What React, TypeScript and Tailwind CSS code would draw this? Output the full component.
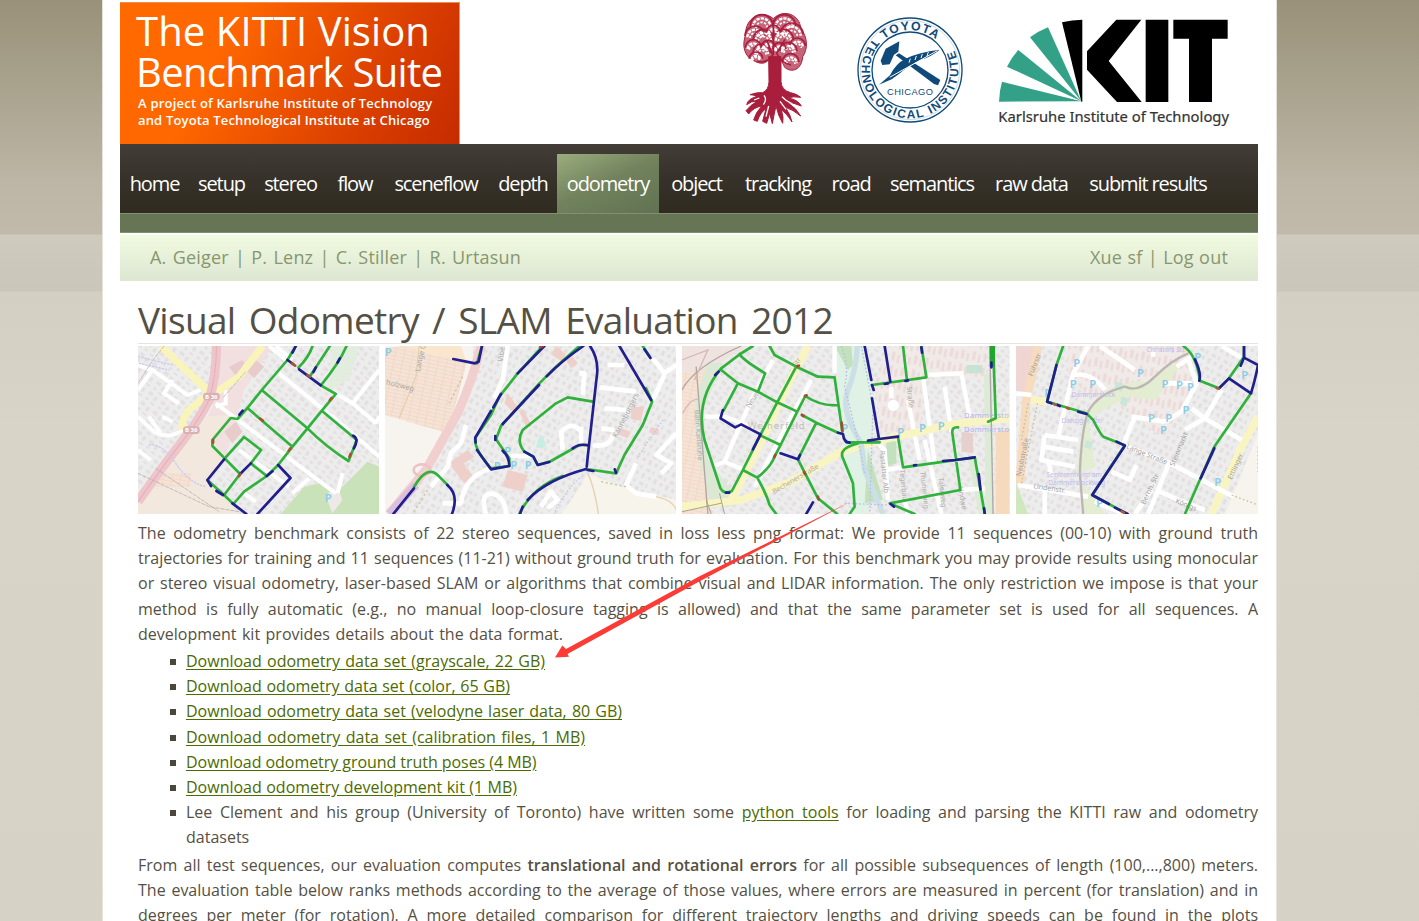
import React from "react";

const navItems: { label: string; box: string; active?: boolean }[] = [
  { label: "home", box: "w-[69px]" },
  { label: "setup", box: "w-[65px]" },
  { label: "stereo", box: "w-[73px]" },
  { label: "flow", box: "w-[56px]" },
  { label: "sceneflow", box: "w-[106px]" },
  { label: "depth", box: "w-[68px]" },
  { label: "odometry", box: "w-[102px]", active: true },
  { label: "object", box: "w-[75px]" },
  { label: "tracking", box: "w-[88px]" },
  { label: "road", box: "w-[58px]" },
  { label: "semantics", box: "w-[104px]" },
  { label: "raw data", box: "w-[95px]" },
  { label: "submit results", box: "w-[138px]" },
];

const intro = [
  "The odometry benchmark consists of 22 stereo sequences, saved in loss less png format: We provide 11 sequences (00-10) with ground truth",
  "trajectories for training and 11 sequences (11-21) without ground truth for evaluation. For this benchmark you may provide results using monocular",
  "or stereo visual odometry, laser-based SLAM or algorithms that combine visual and LIDAR information. The only restriction we impose is that your",
  "method is fully automatic (e.g., no manual loop-closure tagging is allowed) and that the same parameter set is used for all sequences. A",
];

const downloads = [
  { label: "Download odometry data set (grayscale, 22 GB)", box: "w-[359px]" },
  { label: "Download odometry data set (color, 65 GB)", box: "w-[324px]" },
  { label: "Download odometry data set (velodyne laser data, 80 GB)", box: "w-[436px]" },
  { label: "Download odometry data set (calibration files, 1 MB)", box: "w-[399px]" },
  { label: "Download odometry ground truth poses (4 MB)", box: "w-[349px] tracking-[-0.05px]" },
  { label: "Download odometry development kit (1 MB)", box: "w-[331px]" },
];

function Line({ children }: { children: React.ReactNode }) {
  return <div className="whitespace-nowrap [text-align-last:justify]">{children}</div>;
}

function Bullet({ children }: { children: React.ReactNode }) {
  return (
    <li className="flex">
      <span className="mt-[10px] mr-[10px] ml-[32px] h-[6px] w-[6px] shrink-0 bg-[#4c473b]" />
      <div className="min-w-0 flex-1">{children}</div>
    </li>
  );
}

function TreeLogo() {
  const scallops = [
    [125, 70, 34], [105, 100, 30], [130, 110, 30], [100, 135, 24], [125, 150, 26], [108, 168, 20],
    [193, 70, 34], [215, 95, 34], [190, 110, 30], [232, 130, 24], [205, 145, 26], [212, 178, 25], [160, 90, 22],
    [145, 135, 22], [178, 140, 20],
  ];
  return (
    <svg className="h-[120px] w-[76px]" viewBox="60 30 228 360" fill="none" stroke="#a91e3c">
      <path d="M84 170C65 145 72 120 77 102C75 58 122 24 160 56C192 24 240 45 242 85C264 112 264 148 248 170C245 210 215 220 194 202C188 190 185 180 178 174H148C136 200 108 190 84 170Z" fill="#c4657a" strokeWidth="3" />
      <g strokeWidth="5" stroke="#a91e3c">
        {scallops.map(([x, y, r], i) => (
          <g key={i}>
            <path d={`M${x - r} ${y + 8}A${r} ${r} 0 0 1 ${x + r} ${y + 8}`} />
            <path d={`M${x - r + 7} ${y + 12}A${r - 7} ${r - 7} 0 0 1 ${x + r - 7} ${y + 12}`} stroke="#fff" strokeWidth="7" strokeDasharray="10 3" />
            <path d={`M${x - r / 2} ${y + 14}A${r / 2} ${r / 2} 0 0 1 ${x + r / 2} ${y + 14}`} stroke="#fff" strokeWidth="5" strokeDasharray="7 4" />
          </g>
        ))}
      </g>
      <path d="M112 184Q145 190 158 165L140 120M213 195Q185 190 170 160L195 118M160 60V165" strokeWidth="5" />
      <path d="M146 170L183 170L183 245Q184 270 212 278Q232 282 242 292Q218 288 205 294Q235 300 244 318Q222 308 203 308Q230 325 242 348Q218 328 196 322Q212 345 216 366Q198 338 184 330Q192 352 188 370L176 345L168 318L162 345L157 371L149 340L140 370L128 364L138 326Q120 338 112 364L101 360Q108 335 126 318Q100 322 86 342L78 332Q92 314 112 304Q95 302 80 314Q84 296 110 290Q102 284 90 284Q112 276 128 278Q146 270 147 245Z" fill="#a91e3c" strokeWidth="3" strokeLinejoin="round" />
      <path d="M132 286Q142 298 130 314M118 294L102 300M186 290Q198 304 218 312M180 304L198 328M146 318L138 350" stroke="#fff" strokeWidth="4" />
    </svg>
  );
}

function ToyotaSeal() {
  return (
    <svg className="h-[112px] w-[112px]" viewBox="405 42 336 336" fill="none">
      <circle cx="573" cy="210" r="156" stroke="#0f4a7a" strokeWidth="4" />
      <circle cx="573" cy="210" r="149" stroke="#0f4a7a" strokeWidth="2" opacity=".3" />
      <circle cx="573" cy="210" r="114" stroke="#0f4a7a" strokeWidth="4" />
      <path id="seal-top" d="M453 210A120 120 0 0 1 693 210" />
      <path id="seal-bottom" d="M486 94A145 145 0 1 0 660 94" />
      <g fill="#0f4a7a" className="font-['Liberation_Sans',sans-serif] font-bold">
        <text fontSize="37" textAnchor="middle" textLength="168"><textPath href="#seal-top" startOffset="50%">TOYOTA</textPath></text>
        <text fontSize="36"><textPath href="#seal-bottom" startOffset="32" textLength="618">TECHNOLOGICAL INSTITUTE</textPath></text>
      </g>
      <text x="573" y="286" fontSize="28" textAnchor="middle" textLength="138" fill="#0f4a7a" className="font-['Liberation_Sans',sans-serif]">CHICAGO</text>
      <g fill="#0f4a7a">
        <path d="M485 182L500 146L541 124L538 155L525 164L512 193L490 195Z" />
        <path d="M530 166L540 160L664 240L657 256L645 252Z" />
        <path d="M480 254L513 226Q530 190 560 176Q600 156 662 149Q640 168 605 180Q570 196 540 222L518 238Z" />
      </g>
      <path d="M512 232L655 152M574 176L570 188M592 168L588 180M610 162L606 174M628 156L624 168" stroke="#fff" strokeWidth="3" />
    </svg>
  );
}

function KitLogo() {
  return (
    <svg className="h-[112px] w-[236px]" viewBox="50 50 708 336">
      <g fill="#33a188">
        <path d="M59 304Q60 272 68 244L306 303Z" />
        <path d="M83 199Q97 171 117 149L306 303Z" />
        <path d="M152 111Q178 92 206 81L306 303Z" />
      </g>
      <path d="M248 66Q278 58 309 58V304H306Z" />
      <path d="M323 153L411 58H486L388 182L487 305H413L323 208Z" />
      <path d="M499 58H567V305H499ZM582 58H745V115H698V305H629V115H582Z" />
      <text x="57" y="366" fontSize="43" textLength="692" lengthAdjust="spacingAndGlyphs" fill="#333" stroke="#333" strokeWidth=".6" className="font-['Noto_Sans',sans-serif]">Karlsruhe Institute of Technology</text>
    </svg>
  );
}

const green = "#2fb13b";
const navy = "#211e8d";

function Tracks({ paths, color }: { paths: string; color: string }) {
  return <path d={paths} stroke={color} strokeWidth="8" fill="none" strokeLinejoin="round" strokeLinecap="round" />;
}

function Parking({ spots }: { spots: number[][] }) {
  return (
    <g fill="#8bcbe6" fontSize="34" fontWeight="600" className="font-['Noto_Sans',sans-serif]">
      {spots.map(([x, y]) => (
        <text key={`${x}-${y}`} x={x} y={y}>P</text>
      ))}
    </g>
  );
}

function MapStrip() {
  return (
    <svg className="block h-[168px] w-[1120px]" viewBox="0 0 1119 168" preserveAspectRatio="none" fill="none">
      <defs>
        <pattern id="houses" width="46" height="38" patternUnits="userSpaceOnUse" patternTransform="rotate(38)">
          <rect width="46" height="38" fill="#ededed" />
          <path d="M5 5h15v10h-15zM28 8h10v14h-10zM8 25h10v8h-10zM28 29h14v6h-14z" fill="#e3e0df" />
        </pattern>
        <pattern id="houses-steep" width="44" height="40" patternUnits="userSpaceOnUse" patternTransform="rotate(-62)">
          <rect width="44" height="40" fill="#ededed" />
          <path d="M5 5h15v9h-15zM28 9h9v14h-9zM8 25h10v9h-10zM27 30h12v6h-12z" fill="#e2dfde" />
        </pattern>
        <pattern id="allotment" width="26" height="22" patternUnits="userSpaceOnUse" patternTransform="rotate(12)">
          <rect width="26" height="22" fill="#f5e3d6" />
          <path d="M0 4h26M4 0v22M0 15h26" stroke="#f0d3c2" strokeWidth="2" />
        </pattern>
        <pattern id="pinkblocks" width="34" height="42" patternUnits="userSpaceOnUse" patternTransform="rotate(10)">
          <rect width="34" height="42" fill="#f0eae9" />
          <path d="M4 4h9v26h-9zM21 12h7v24h-7z" fill="#ecdad7" />
        </pattern>
        <clipPath id="c1"><rect x="27" y="18" width="723" height="504" /></clipPath>
        <clipPath id="c2"><rect x="17" y="18" width="873" height="504" /></clipPath>
        <clipPath id="c3"><rect x="22" y="18" width="983" height="504" /></clipPath>
        <clipPath id="c4"><rect x="34" y="18" width="725" height="504" /></clipPath>
      </defs>

      <g transform="translate(-9 -6) scale(.33333)"><g clipPath="url(#c1)">
        <rect x="27" y="18" width="723" height="504" fill="url(#houses)" />
        <path d="M265 18H430L345 150L290 350L240 430L170 360L250 200Z" fill="#f2e0e0" />
        <path d="M300 80l40-20 20 30-35 25zM350 90l30-30 25 20-30 35zM285 275l35-30 20 30-30 35zM200 345l30-30 35 30-30 45zM180 390l25-20 35 35-25 25z" fill="#e8cccc" />
        <path d="M27 522V470L140 350L220 230L300 225L250 300L290 360L235 420L330 522Z" fill="#f2e8de" />
        <path d="M75 400h110v40h-120z" fill="url(#allotment)" />
        <path d="M455 522L525 440L570 430L620 460L715 365L750 380V522Z" fill="#c9e2b9" />
        <path d="M590 470l30-40 20 50-30 40z" fill="#ece9e7" />
        <path d="M610 18h80l-30 100-70 40z" fill="#e2eddf" />
        <path d="M27 75L70 90L175 165L215 150M70 90L27 150M130 120L105 160L150 190M27 230L75 275Q120 300 160 270M60 230L95 280M27 330L65 360M100 230L130 245M260 190L440 325L620 460M450 100L640 255L750 350M440 18L490 60M420 18L470 60M750 90L670 190L610 155M670 190L740 250M625 460L640 400M490 460L540 415M740 250L750 230M290 150V190L260 200M330 330L480 440M345 460L380 485" stroke="#fff" strokeWidth="12" />
        <path d="M95 18L250 165L330 110L400 18M235 165L180 210Q155 240 160 270" stroke="#f9f5ba" strokeWidth="22" />
        <path d="M262 18Q262 110 240 180Q210 240 155 310T27 485" stroke="#eec5ca" strokeWidth="28" />
        <path d="M262 18Q262 110 240 180Q210 240 155 310T27 485" stroke="#e3b0b7" strokeWidth="3" />
        <path d="M105 18L65 70L27 130M350 95L280 175M27 400L240 500L330 515M80 385L270 515" stroke="#b7b2b0" strokeWidth="2.5" strokeDasharray="12 3" />
        <path d="M60 315Q100 310 140 370T230 440M27 50L130 75M30 70L120 90" stroke="#c9caef" strokeWidth="4" strokeDasharray="7 3" />
        <g fill="#dbb0b4"><rect x="222" y="158" width="50" height="23" rx="10" /><rect x="162" y="259" width="50" height="23" rx="10" /></g>
        <g fill="#fff" fontSize="18" fontWeight="bold"><text x="228" y="176">B 36</text><text x="168" y="277">B 36</text></g>
        <Parking spots={[[587, 487]]} />
        <Tracks color={green} paths="M500 18L475 60L398 150L355 204L325 237L305 234L250 300V318L287 355L333 402L285 465L313 492L345 455L413 408L365 370L396 330L345 291L287 355M413 408L447 375L490 320L535 265L578 212L620 162L575 136M550 18Q540 50 508 83M602 18L543 108M652 18Q630 70 575 136M355 204L490 320M398 150L535 265Q590 320 658 363L683 300L578 212M235 420L285 465L313 492" />
        <Tracks color={navy} paths="M500 18L490 38M475 60L492 72M510 88L575 136M560 82L553 96M632 55L625 68M341 212L331 224M672 287Q690 296 674 325M285 358L235 420L246 438M262 453L282 465M310 490L352 522M385 522L484 414L447 375M413 408L430 394M333 402L365 370" />
        <Tracks color="#a55334" paths="M488 70L498 77M535 105L542 110M607 174L602 181M393 236L401 242M484 325L479 332M252 300V308M334 402L330 408M664 342L661 350" />
      </g></g>

      <g transform="translate(241 -6) scale(.33333)"><g clipPath="url(#c2)">
        <rect x="17" y="18" width="873" height="504" fill="url(#houses-steep)" />
        <path d="M17 18H280V150L140 400L20 522H17Z" fill="#f7f4ef" />
        <path d="M17 25L70 18L265 60L205 280L17 225Z" fill="url(#allotment)" />
        <path d="M70 18H245L260 60L170 48Z" fill="#f9e6cc" />
        <path d="M545 522Q600 450 625 400L740 445L890 480V522Z" fill="#f7f4ec" />
        <path d="M530 18l30 25-15 20-30-20zM560 60l20-10 15 20-20 15zM385 160l30 40-15 15-25-25zM420 215l12-8 25 50-15 8zM215 365l50-35 20 20-30 20 15 45-15 15-35-45zM385 390l60 15-15 50-60-15zM755 205l40-8-10 45-30-5zM725 265l30 10-10 20-25-10zM815 260l25 10-10 15-22-8zM240 400l25-15 20 30-20 15z" fill="#eecfca" />
        <path d="M480 285Q490 285 500 315Q490 330 470 322Z" fill="#c9ece3" />
        <path d="M385 18L370 120L345 175M260 255L245 310L215 340L205 380L155 440M600 100H615L610 165M685 75H735M660 142L770 155M675 205L740 210M665 265L705 270M605 275Q580 240 545 275L550 330M605 260V315M640 315Q690 325 700 285M390 348H455M190 490H245Q255 410 335 385M320 522Q300 460 340 460Q380 475 380 522M770 370L740 435L770 460L830 470M890 280L830 345L875 370L845 400M820 55L855 100L890 75M855 105L820 180M485 500L515 455L535 480L505 505" stroke="#fff" strokeWidth="14" strokeLinejoin="round" />
        <path d="M305 18Q280 120 235 220L140 390L30 522" stroke="#f1cfcf" strokeWidth="27" />
        <path d="M110 435L30 522" stroke="#dcbfdc" strokeWidth="25" />
        <ellipse cx="128" cy="390" rx="25" ry="17" stroke="#ecc3c4" strokeWidth="8" />
        <path d="M120 18L110 110L60 235M625 400Q645 440 657 522M830 470Q880 480 890 510" stroke="#e4d1b0" strokeWidth="4" />
        <path d="M250 110L210 190M145 450L100 522M665 425L740 440" stroke="#cfc4a2" strokeWidth="4" strokeDasharray="7 7" />
        <path d="M600 415Q550 460 525 522M850 240L775 350" stroke="#c4c1ef" strokeWidth="4" strokeDasharray="4 6" />
        <g fill="#a8a8a8" fontSize="22" className="font-['Noto_Sans',sans-serif]"><text transform="translate(122 96) rotate(-78)">Lange C</text><text transform="translate(19 133) rotate(14)">holzweg</text><text transform="translate(370 66) rotate(-82)">Vibe</text><text transform="translate(712 295) rotate(-63)">Kanneburgers</text></g>
        <Parking spots={[[17, 47], [375, 344], [343, 390], [393, 388], [436, 388]]} />
        <Tracks color={green} paths="M308 18L293 70M490 18L415 100L360 170L335 225L288 293Q282 325 335 385L390 378V355L350 298L365 258L480 130L530 80L600 18M640 185L565 172L530 190L430 270Q410 305 435 335L462 350L475 375L515 363L600 315H625M710 400L735 345L790 255L818 185L800 145M105 440Q145 370 180 410L205 435M620 387L710 400M550 408Q460 440 420 522M790 18L812 52" />
        <Tracks color={navy} paths="M222 57L287 70L298 65L308 18M495 18L415 100M365 162L342 202M335 213L288 293L289 307M293 330L335 388L390 378Q390 350 370 332M348 300V288M370 252L479 135M502 109Q550 60 612 18M632 18Q660 60 652 110L625 350L622 380M720 18L815 180M435 335L462 350L475 375L510 366M580 325Q600 310 626 316M620 387Q500 420 445 480M430 500L422 522M42 522L104 445M204 435Q240 465 218 522M795 28L813 54M625 390L642 393M706 388L710 398" />
        <Tracks color="#a94545" paths="M482 22L490 18" />
      </g></g>

      <g transform="translate(536 -6) scale(.33333)"><g clipPath="url(#c3)">
        <rect x="22" y="18" width="983" height="504" fill="url(#houses)" />
        <path d="M22 100L100 60L60 200L110 522H22Z" fill="url(#allotment)" />
        <path d="M22 18H220L110 85L22 100Z" fill="#efe3e0" />
        <path d="M100 70H145L85 210L100 360L175 455L165 500H110Q50 280 65 170Z" fill="#dbe8d3" />
        <path d="M475 18H575L595 180L580 522H540L515 380L490 130Z" fill="#e0f1e5" />
        <path d="M480 18L520 90L535 75L530 18ZM580 330L625 480L570 490ZM635 300L665 305V370L635 380Z" fill="#c3e1bd" />
        <path d="M765 18H935V120L760 105Z" fill="url(#pinkblocks)" />
        <path d="M640 18H765V120L600 130ZM600 130L740 120V270L620 280Z" fill="url(#pinkblocks)" />
        <path d="M875 75h48v25h-48z" fill="#c8e2d4" /><path d="M860 275l35 5v60l-35-5z" fill="#e6d0cd" />
        <path d="M963 280L1005 265V522H963Z" fill="#f5dabd" />
        <path d="M940 100L945 522M890 350L925 522" stroke="#dcebd5" strokeWidth="24" />
        <path d="M295 60L230 180L150 365L115 380M90 230H150L240 265M150 365L210 390M410 120L350 230L240 440M480 18V100M650 140V175M700 180L735 360M745 110L780 370M760 105L860 100L885 230M600 300L630 330L640 480M635 390L690 380M860 450L930 445M810 140L830 275M690 480L700 522M750 300L800 522" stroke="#fff" strokeWidth="13" />
        <circle cx="656" cy="196" r="17" fill="#fff" />
        <path d="M400 18Q350 110 305 210T165 490M22 500L200 480L350 425L500 335L620 300L850 250L1005 235" stroke="#f9f5c2" strokeWidth="23" />
        <path d="M548 18Q545 90 520 150T560 310L570 390L625 522" stroke="#cddfe6" strokeWidth="16" />
        <path d="M500 18Q525 80 510 140L550 300L570 400M560 18L595 200L585 522M510 490L640 495" stroke="#b5bfe6" strokeWidth="4" strokeDasharray="5 6" />
        <path d="M22 150Q60 80 200 18M65 80L100 522M945 18L955 522" stroke="#b0a6a3" strokeWidth="4" />
        <path d="M22 60L100 30L60 120M25 220Q50 170 75 180" stroke="#d9b5b8" strokeWidth="4" />
        <path d="M22 515L140 490M95 480L110 522M135 460L150 522" stroke="#aaa58e" strokeWidth="3" />
        <g fill="#adaaa8" fontSize="21" className="font-['Noto_Sans',sans-serif]">
          <text x="220" y="268" fontSize="28" textLength="170" fill="#c0bebe">Weiherfeld</text><text transform="translate(60 210) rotate(86)">Bahn Karlsruhe</text><text transform="translate(298 462) rotate(-30)">Bechenerstraße</text><text transform="translate(225 205) rotate(-58)">Neue</text><text transform="translate(365 82) rotate(-58)">Str</text><text transform="translate(697 140) rotate(85)">Straße</text><text transform="translate(675 390) rotate(84)">Tegerbau</text><text transform="translate(737 395) rotate(84)">Thunerweg</text><text transform="translate(792 414) rotate(84)">Talerweg</text><text transform="translate(850 440) rotate(80)">Lindwe</text><text transform="translate(615 333) rotate(84)">Rastatter Alb</text>
        </g>
        <g fill="#b3b3f1" fontSize="23" className="font-['Noto_Sans',sans-serif]"><text x="868" y="233" textLength="134">Dammersto</text><text x="868" y="275" textLength="134">Dammersto</text></g>
        <Parking spots={[[668, 289], [733, 276], [789, 270], [500, 276]]} />
        <Tracks color={green} paths="M235 18L197 42L140 85Q60 180 90 300L138 445Q150 465 172 453L205 390L255 290L308 187L365 80M140 90L190 130L250 155L308 187L368 215M195 42Q205 60 272 100L250 155M190 130L147 212M285 18L300 45L365 80L430 110L480 112L503 275M392 168Q440 200 490 195M368 215L392 168M368 215L318 315L300 350Q290 380 248 413L205 390M382 225L425 248L490 278M425 248L370 358M255 285L318 315M370 358L430 475L488 522M248 413Q275 460 285 495L305 522M515 307H615M550 310Q490 325 505 355L535 430L540 500L525 522M592 135L755 112L740 18M685 18L697 123M670 290L685 382L900 352M850 262Q830 260 833 280L857 450L645 490L720 522M900 352L930 522M955 18L963 235L940 245" />
        <path d="M953 18V80" stroke="#22a52c" strokeWidth="16" />
        <Tracks color={navy} paths="M132 95L122 105M145 210L138 235L182 262L200 253L258 283L235 328M318 340L370 358L376 345M415 487L395 522M490 278L505 282Q508 308 525 308M570 18L590 120M592 175L613 297L670 290M580 302L613 297M630 18L647 125M592 135L597 150M630 132L640 130M692 123L700 121M740 22L742 38M718 376L724 375M805 363L842 360L900 352M912 402L917 448M928 505L930 522M950 68V82M648 492L658 500M154 458H164" />
        <Tracks color="#a44c34" paths="M368 79L373 77M391 168L396 166M382 225L387 228M501 248L503 272M302 345L299 352M388 396L392 402M430 470L432 478" />
      </g></g>

      <g transform="translate(866 -6) scale(.33333)"><g clipPath="url(#c4)">
        <rect x="34" y="18" width="725" height="504" fill="url(#houses-steep)" />
        <path d="M34 18H90L60 160H34Z" fill="#efd6d2" />
        <path d="M190 18H550L570 130L480 300L390 230L340 200L240 160L190 100Z" fill="url(#pinkblocks)" />
        <path d="M245 215Q300 120 430 125L500 75L540 60L450 180L370 170L250 235L270 380L230 400L240 522H300L215 400L235 230Z" fill="#e2edd2" />
        <path d="M350 170l20 5-5 25-20-8zM245 300l20 8-8 20-20-8zM330 125l25 5-5 25-20-8z" fill="#c8e6da" />
        <path d="M759 280L660 522H759Z" fill="#f7f4ee" />
        <path d="M34 430L70 522H34Z" fill="#cfe7bc" />
        <path d="M100 18L65 180L45 430" stroke="#f6dbbf" strokeWidth="26" />
        <path d="M78 180L125 185M759 230L710 320L620 522" stroke="#f9f5c2" strokeWidth="23" />
        <path d="M34 160L80 165M250 18L205 100L160 290M285 18L390 90M205 105Q260 95 300 150M120 285L220 300M120 285L110 360L210 380M115 320L205 335M130 360L140 410M380 230L480 245M390 230L355 315M480 245L530 215L575 130L550 60M560 205L600 235L710 300M650 150L600 235L540 270M355 315L495 370L685 470M490 375L430 522M395 375L375 420L320 395M40 435L250 470M120 450V522M465 455L520 480L600 510M480 130H560M515 80L560 50M445 35V50M650 18L720 60M270 485L360 522M390 522L440 450" stroke="#fff" strokeWidth="14" strokeLinejoin="round" />
        <path d="M550 40Q500 60 450 110T360 140Q280 160 250 215Q230 270 225 400L235 522" stroke="#bdb6b3" strokeWidth="7" />
        <path d="M98 190L50 430M70 190L50 300M759 320V400M680 465L759 495" stroke="#cfbb9f" strokeWidth="4" strokeDasharray="5 7" />
        <g fill="#a3a09d" fontSize="21" className="font-['Noto_Sans',sans-serif]"><text transform="translate(83 110) rotate(-68)">Führstr</text><text transform="translate(48 410) rotate(-78)">Neubstraße</text><text transform="translate(363 325) rotate(22)">Lange Straße</text><text transform="translate(507 380) rotate(-67)">Steinmarkt</text><text transform="translate(420 495) rotate(-65)">Bernh. Str</text><text transform="translate(680 420) rotate(-65)">Ettlinger</text><text transform="translate(85 445) rotate(8)">Lindenstr.</text><text transform="translate(510 488) rotate(22)">Königs</text></g>
        <g fill="#bfbaee" fontSize="20" className="font-['Noto_Sans',sans-serif]"><text x="200" y="170">Dammerstock</text><text x="170" y="248">Danziger Str.</text><text x="425" y="37">Christofs Str.</text><text x="125" y="411">Seniorenheim am</text><text x="130" y="435">Dammerstockweg</text></g>
        <Parking spots={[[205, 80], [396, 110], [195, 144], [253, 145], [470, 143], [513, 148], [546, 153], [568, 62], [709, 117], [118, 170], [429, 246], [481, 246], [465, 282], [533, 223], [628, 438], [274, 500]]} />
        <Tracks color={green} paths="M175 18L155 75L127 185L245 220L265 240Q285 280 295 290L360 316L262 465L368 522M535 18Q575 45 585 122L642 145L672 115L717 50V18M738 160L628 320L540 522" />
        <Tracks color={navy} paths="M155 75L127 185L140 190M158 195L165 198M220 215L245 222M335 305L360 317L262 465L312 492M330 503L368 522M570 58Q590 100 583 122M642 145L672 115L738 160Q753 110 759 75L717 53V18M717 53L707 77M628 325L587 415" />
        <Tracks color="#a95b3d" paths="M147 192L152 194M187 204L192 206M350 514L357 518M635 144L641 146" />
      </g></g>
    </svg>
  );
}

export default function App() {
  return (
    <div className="relative flex h-[921px] w-[1419px] overflow-hidden bg-[linear-gradient(#999179_0,#aaa38e_90px,#bdb5a5_180px,#c1b9a9_234px,#cecabe_235px,#cac6ba_291px,#d3cfc3_292px,#d8d4c8_430px,#d6d2c6_921px)] pl-[102px] font-['Open_Sans','Noto_Sans',sans-serif] text-[#555044]">
      <div className="flex h-[921px] w-[1175px] flex-col border-x border-[#e5e2dc] bg-white pl-[17px]">
        <header className="flex h-[144px] w-[1138px] shrink-0 pt-[2px]">
          <div className="h-[142px] w-[340px] border-t border-r border-[#ed8d57] bg-[linear-gradient(118deg,#ff6a00_0%,#ff6700_30%,#d83c00_76%,#c52c00_100%)] pt-[7px] pl-[16px] text-white">
            <div className="text-[40px] leading-[41px] whitespace-nowrap">
              <div className="tracking-[0.1px]">The KITTI Vision</div>
              <div className="tracking-[-0.7px]">Benchmark Suite</div>
            </div>
            <div className="mt-[3px] pl-[2px] text-[13px] leading-[17px] font-semibold tracking-[0.22px] whitespace-nowrap">
              <div>A project of Karlsruhe Institute of Technology</div>
              <div className="tracking-[0.16px]">and Toyota Technological Institute at Chicago</div>
            </div>
          </div>
          <div className="ml-[280px] pt-[8px]"><TreeLogo /></div>
          <div className="ml-[38px] pt-[12px]"><ToyotaSeal /></div>
          <div className="ml-[30px] pt-[15px]"><KitLogo /></div>
        </header>

        <nav className="flex h-[69px] w-[1138px] shrink-0 items-end bg-linear-to-b from-[#423d37] via-[#36322a] to-[#302b20]">
          {navItems.map((item) => (
            <a
              key={item.label}
              className={
                item.active
                  ? `${item.box} flex h-[59px] justify-center bg-[linear-gradient(155deg,#9aad7d,#71825d_48%,#617253)] pt-[15px] text-[20px] leading-[30px] font-medium tracking-[-1.1px] whitespace-nowrap text-white`
                  : `${item.box} flex h-[59px] justify-center pt-[15px] text-[20px] leading-[30px] font-medium tracking-[-1.1px] whitespace-nowrap text-white`
              }
            >
              {item.label}
            </a>
          ))}
        </nav>
        <div className="h-[20px] w-[1138px] shrink-0 border-y border-[#829071] bg-[#667554]" />
        <div className="mt-[2px] flex h-[46px] w-[1138px] shrink-0 items-center justify-between bg-linear-to-b from-[#f1fbe0] to-[#dde6d2] px-[30px] pb-[2px] text-[18px] tracking-[0.2px] text-[#87976d]">
          <div className="w-[371px] whitespace-nowrap [text-align-last:justify]">A. Geiger | P. Lenz | C. Stiller | R. Urtasun</div>
          <div className="w-[138px] whitespace-nowrap [text-align-last:justify]">Xue sf | Log out</div>
        </div>

        <main className="ml-[18px] w-[1120px] text-[16px] leading-[25.2px] font-[450]">
          <h1 className="mt-[13px] h-[50px] border-b border-[#e5e3df] text-[37px] leading-[52px] font-normal tracking-[-0.7px] text-[#555044]">
            <div className="w-[695px] whitespace-nowrap [text-align-last:justify]">Visual Odometry / SLAM Evaluation 2012</div>
          </h1>
          <div className="mt-[2px]"><MapStrip /></div>
          <div className="mt-[7px]">
            {intro.map((line) => <Line key={line}>{line}</Line>)}
            <div className="w-[425px]"><Line>development kit provides details about the data format.</Line></div>
          </div>
          <ul className="mt-[2px]">
            {downloads.map((d) => (
              <Bullet key={d.label}>
                <div className={`${d.box} whitespace-nowrap text-[#4b6b00] underline underline-offset-2 [text-align-last:justify]`}>{d.label}</div>
              </Bullet>
            ))}
            <Bullet>
              <Line>Lee Clement and his group (University of Toronto) have written some <span className="text-[#4b6b00] underline underline-offset-2">python tools</span> for loading and parsing the KITTI raw and odometry</Line>
              <div>datasets</div>
            </Bullet>
          </ul>
          <div className="mt-[2px]">
            <Line>From all test sequences, our evaluation computes <b className="font-semibold tracking-[-0.05px]">translational and rotational errors</b> for all possible subsequences of length (100,...,800) meters.</Line>
            <Line>The evaluation table below ranks methods according to the average of those values, where errors are measured in percent (for translation) and in</Line>
            <Line>degrees per meter (for rotation). A more detailed comparison for different trajectory lengths and driving speeds can be found in the plots</Line>
          </div>
        </main>
      </div>
      <svg className="pointer-events-none absolute top-0 left-0 h-[921px] w-[1419px]" viewBox="0 0 1419 921">
        <path d="M555 657.5L562.3 645.5L566 649L700 576L852 501L702 580L567.5 654L569 656.8Z" fill="#fc3b36" />
      </svg>
    </div>
  );
}
